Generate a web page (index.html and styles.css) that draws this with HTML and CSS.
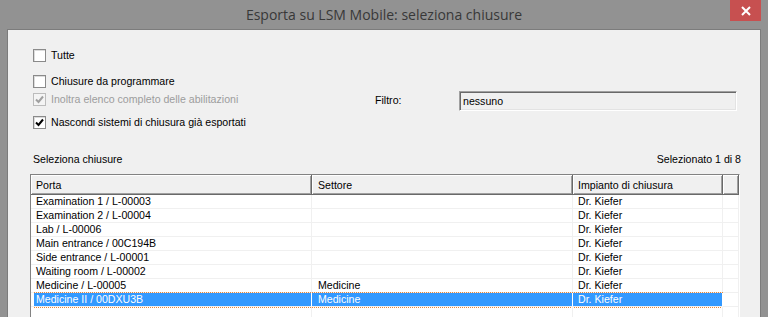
FILE: index.html
```html
<!DOCTYPE html>
<html>
<head>
<meta charset="utf-8">
<link rel="stylesheet" href="styles.css">
</head>
<body>
<div class="window">
  <div class="titlebar">
    <span class="title">Esporta su LSM Mobile: seleziona chiusure</span>
    <div class="close">
      <svg width="10" height="10" viewBox="0 0 10 10"><path d="M1 1L9 9M9 1L1 9" stroke="#fff" stroke-width="2"/></svg>
    </div>
  </div>
  <div class="client">
    <div class="options">
      <div class="opt r1"><span class="cb"></span><span>Tutte</span></div>
      <div class="opt r2"><span class="cb"></span><span>Chiusure da programmare</span></div>
      <div class="opt r3">
        <div class="optlabel disabled"><span class="cb checked"><svg width="9" height="9" viewBox="0 0 9 9"><path d="M1 4.5L3.5 7L8 1.5" fill="none" stroke="#a0a0a0" stroke-width="2"/></svg></span><span>Inoltra elenco completo delle abilitazioni</span></div>
        <span class="filter-label">Filtro:</span>
        <div class="input">nessuno</div>
      </div>
      <div class="opt r4"><span class="cb checked"><svg width="9" height="9" viewBox="0 0 9 9"><path d="M1 4.5L3.5 7L8 1.5" fill="none" stroke="#000" stroke-width="2"/></svg></span><span>Nascondi sistemi di chiusura già esportati</span></div>
    </div>
    <div class="list-caption"><span>Seleziona chiusure</span><span>Selezionato 1 di 8</span></div>
    <div class="list">
      <div class="lrow head">
        <div class="c c1">Porta</div>
        <div class="c c2">Settore</div>
        <div class="c c3">Impianto di chiusura</div>
        <div class="c c4"></div>
      </div>
      <div class="lrow"><div class="c c1">Examination 1 / L-00003</div><div class="c c2"></div><div class="c c3">Dr. Kiefer</div><div class="c c4"></div></div>
      <div class="lrow"><div class="c c1">Examination 2 / L-00004</div><div class="c c2"></div><div class="c c3">Dr. Kiefer</div><div class="c c4"></div></div>
      <div class="lrow"><div class="c c1">Lab / L-00006</div><div class="c c2"></div><div class="c c3">Dr. Kiefer</div><div class="c c4"></div></div>
      <div class="lrow"><div class="c c1">Main entrance / 00C194B</div><div class="c c2"></div><div class="c c3">Dr. Kiefer</div><div class="c c4"></div></div>
      <div class="lrow"><div class="c c1">Side entrance / L-00001</div><div class="c c2"></div><div class="c c3">Dr. Kiefer</div><div class="c c4"></div></div>
      <div class="lrow"><div class="c c1">Waiting room / L-00002</div><div class="c c2"></div><div class="c c3">Dr. Kiefer</div><div class="c c4"></div></div>
      <div class="lrow"><div class="c c1">Medicine / L-00005</div><div class="c c2">Medicine</div><div class="c c3">Dr. Kiefer</div><div class="c c4"></div></div>
      <div class="lrow sel"><div class="c c1">Medicine II / 00DXU3B</div><div class="c c2">Medicine</div><div class="c c3">Dr. Kiefer</div><div class="c c4"></div></div>
      <div class="lrow last"><div class="c c1"></div><div class="c c2"></div><div class="c c3"></div><div class="c c4"></div></div>
    </div>
  </div>
</div>
</body>
</html>
```

FILE: styles.css
```css
* { box-sizing: border-box; }
html, body { margin: 0; padding: 0; }
body {
  width: 768px;
  height: 317px;
  overflow: hidden;
  background: #929292;
  font-family: "Liberation Sans", Arial, sans-serif;
  font-size: 10.6px;
  color: #000;
}
.window { width: 768px; height: 317px; display: flex; flex-direction: column; overflow: hidden; }
.titlebar {
  position: relative;
  height: 29px;
  flex: none;
  display: flex;
  align-items: center;
  justify-content: center;
}
.title {
  font-family: "Open Sans", "Noto Sans", sans-serif;
  font-size: 14px;
  color: #383838;
  margin-top: -1px;
}
.close {
  position: absolute;
  left: 730px;
  top: 0;
  width: 31px;
  height: 21px;
  background: #c75050;
  display: flex;
  align-items: center;
  justify-content: center;
}
.client {
  flex: 1;
  min-height: 0;
  margin-left: 7px;
  width: 754px;
  background: #f0f0f0;
  border: 1px solid #7c7c7c;
  border-bottom: none;
  padding: 19px 20px 0 22px;
  display: flex;
  flex-direction: column;
  overflow: hidden;
}
.options { padding-left: 3px; }
.opt { display: flex; align-items: flex-start; line-height: 13px; }
.r2 { margin-top: 13px; }
.r3 { margin-top: 3px; height: 20px; }
.r4 { margin-top: 5px; }
.optlabel { display: flex; width: 342px; padding-top: 2px; line-height: 13px; }
.disabled { color: #9d9d9d; }
.cb {
  width: 13px;
  height: 13px;
  flex: none;
  border: 1px solid #8a8a8a;
  background: #fff;
  box-shadow: inset 1px 1px 0 #dcdcdc;
  margin-right: 5px;
  display: flex;
  align-items: center;
  justify-content: center;
}
.disabled .cb { border-color: #bcbcbc; background: #f4f4f4; box-shadow: none; }
.filter-label { width: 84px; padding-top: 3px; line-height: 13px; }
.input {
  width: 278px;
  height: 20px;
  background: #f0f0f0;
  border-style: solid;
  border-width: 1px;
  border-color: #a0a0a0 #fff #fff #a0a0a0;
  box-shadow: inset 1px 1px 0 #696969, inset -1px -1px 0 #e3e3e3;
  padding: 3px 0 0 3px;
  line-height: 13px;
}
.list-caption {
  display: flex;
  justify-content: space-between;
  margin-top: 24px;
  padding-left: 3px;
  width: 711px;
  line-height: 13px;
}
.list {
  margin-top: 8px;
  width: 710px;
  flex: 1;
  min-height: 0;
  overflow: hidden;
  background: #fff;
  border-style: solid;
  border-width: 1px 1px 0 1px;
  border-color: #828282 #fff #fff #828282;
}
.lrow { display: flex; height: 14px; position: relative; }
.lrow.last { height: 10px; }
.c {
  flex: none;
  height: 14px;
  padding-left: 5px;
  line-height: 13px;
  white-space: nowrap;
  overflow: hidden;
  border-right: 1px solid #f0f0f0;
  border-bottom: 1px solid #f0f0f0;
}
.last .c { height: 10px; border-bottom: none; }
.c1 { width: 281px; }
.c2 { width: 261px; padding-left: 6px; }
.c3 { width: 150px; }
.c4 { width: 16px; }
.head { height: 20px; }
.head .c {
  height: 20px;
  background: #f0f0f0;
  border-right: 1px solid #696969;
  border-bottom: 1px solid #696969;
  box-shadow: inset 1px 1px 0 #fff, inset -1px -1px 0 #a0a0a0;
  line-height: 19px;
  padding-top: 1px;
}
.sel .c1, .sel .c2, .sel .c3 { background: #3399ff; color: #fff; border-right-color: #fff; }
.sel .c1 { box-shadow: inset 3px 0 0 #fff; }
.sel::after {
  content: "";
  position: absolute;
  left: 3px;
  top: -1px;
  width: 689px;
  height: 14px;
  border-top: 1px dotted #e7883b;
  border-bottom: 1px dotted #e7883b;
}
```
